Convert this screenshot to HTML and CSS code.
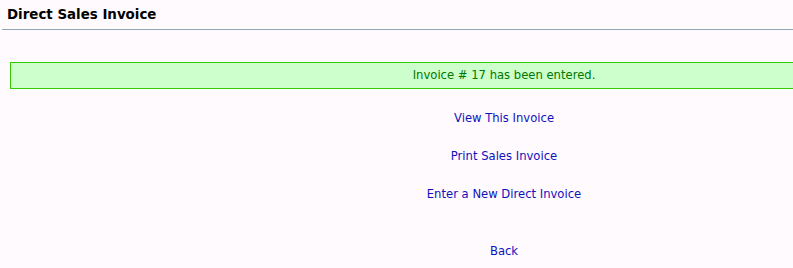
FILE: index.html
```html
<!DOCTYPE html>
<html>
<head>
<meta charset="utf-8">
<link rel="stylesheet" href="styles.css">
</head>
<body>
<div class="page">
  <div class="title-bar"><span class="title">Direct Sales Invoice</span></div>
  <div class="content">
    <div class="success">Invoice # 17 has been entered.</div>
    <div class="links">
      <a href="#" class="link">View This Invoice</a>
      <a href="#" class="link">Print Sales Invoice</a>
      <a href="#" class="link">Enter a New Direct Invoice</a>
    </div>
    <div class="back"><a href="#" class="link">Back</a></div>
  </div>
</div>
</body>
</html>
```
FILE: styles.css
```css
html, body {
  margin: 0;
  padding: 0;
  background: #fefafe;
  overflow: hidden;
}
body {
  font-family: "DejaVu Sans", "Liberation Sans", sans-serif;
  font-size: 11.6px;
}
.page {
  width: 793px;
  height: 268px;
  overflow: hidden;
}
.title-bar {
  margin-left: 2px;
  padding: 7px 0 7px 5px;
  border-bottom: 1px solid #8fa6b2;
}
.title {
  font-weight: bold;
  font-size: 13.4px;
  color: #000;
}
.content {
  width: 988px;
  margin-left: 10px;
  padding-top: 32px;
}
.success {
  background: #ccffcc;
  border: 1px solid #33cc00;
  color: #007700;
  text-align: center;
  height: 25px;
  line-height: 25px;
}
.links {
  display: flex;
  flex-direction: column;
  align-items: center;
  gap: 24px;
  padding-top: 22px;
}
.link {
  color: #1111bb;
  text-decoration: none;
  line-height: 14px;
}
.back {
  display: flex;
  justify-content: center;
  padding-top: 43px;
}
```
